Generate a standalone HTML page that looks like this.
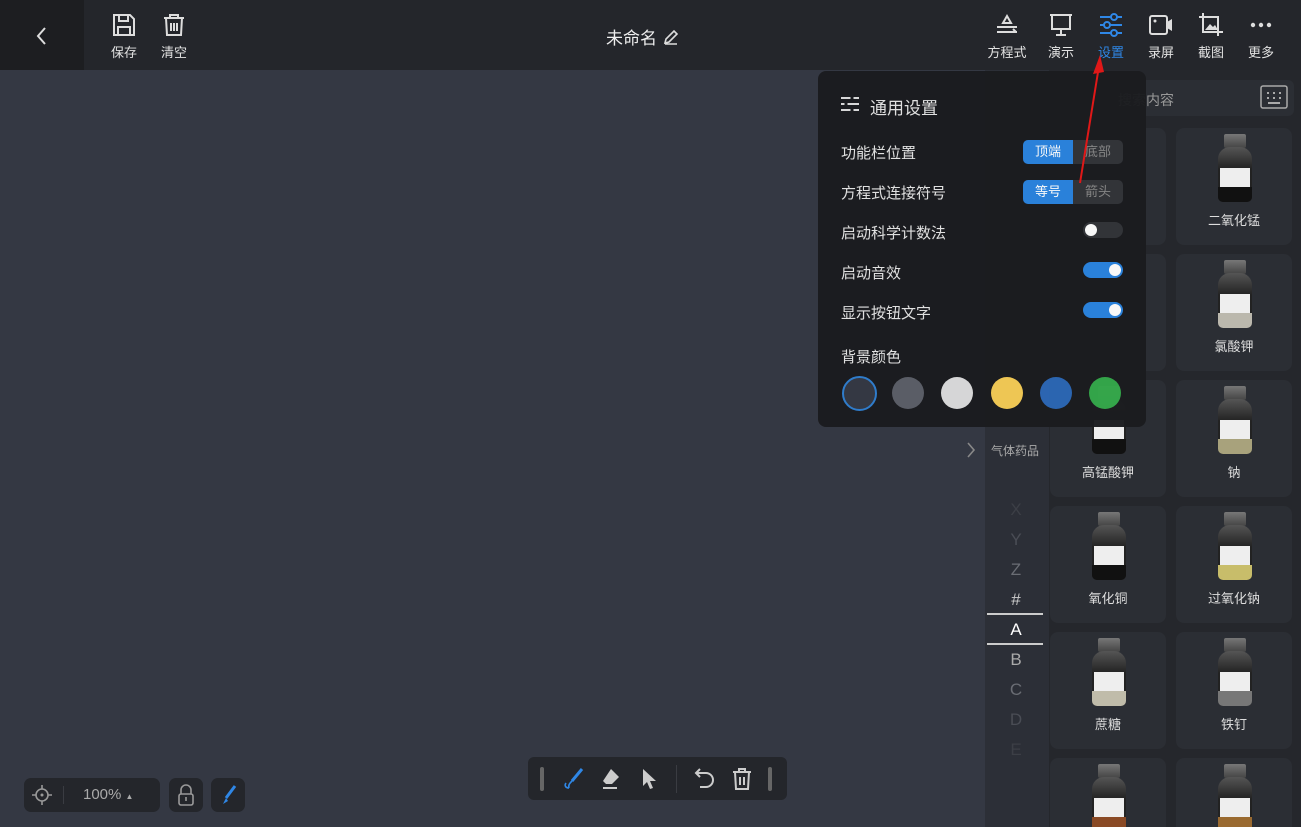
<!DOCTYPE html>
<html><head><meta charset="utf-8"><style>
*{margin:0;padding:0;box-sizing:border-box}
html{width:1301px;height:827px;overflow:hidden}
body{width:1301px;height:827px;overflow:hidden;background:#343843;font-family:"Liberation Sans","Noto Sans CJK SC",sans-serif;position:relative;color:#ddd}
.abs{position:absolute}
.top{left:0;top:0;width:1301px;height:70px;background:#24262b}
.back{left:0;top:0;width:84px;height:70px;background:#1d1e21}
.tb{position:absolute;top:12px;text-align:center;font-size:13px;color:#e2e2e2}
.tb svg{display:block;margin:0 auto 4px}
.side{left:985px;top:70px;width:64px;height:757px;background:#2c2f37}
.panel{left:1049px;top:70px;width:252px;height:757px;background:#25272c}
.clip{left:1049px;top:70px;width:252px;height:757px;overflow:hidden}
.card{position:absolute;width:116px;height:117px;background:#2b2e34;border-radius:8px;text-align:center;font-size:13px;color:#ddd;overflow:hidden}
.bottle{position:absolute;left:42px;top:6px;width:34px;height:68px}
.bottle .cap{position:absolute;left:6px;top:0;width:22px;height:14px;background:linear-gradient(#777,#444);border-radius:2px}
.bottle .body{position:absolute;left:0;top:13px;width:34px;height:55px;background:linear-gradient(#555,#222 40%);border-radius:12px 12px 5px 5px;overflow:hidden}
.bottle .lab{position:absolute;left:2px;top:21px;width:30px;height:19px;background:#eee}
.bottle .fill{position:absolute;left:0;bottom:0;width:34px;height:15px}
.card .nm{position:absolute;left:0;right:0;top:82px}
.letters{left:985px;width:62px;text-align:center;font-size:17px}
.pop{left:818px;top:71px;width:328px;height:356px;background:#1b1c1f;border-radius:8px;opacity:.97}
.row{position:absolute;left:23px;font-size:15px;color:#e6e6e6}
.seg{position:absolute;left:205px;width:100px;height:24px;border-radius:5px;background:#333539;font-size:13px;overflow:hidden}
.seg span{display:inline-block;width:50px;height:24px;line-height:24px;text-align:center;color:#888}
.seg span.on{background:#2a84e0;color:#fff}
.tg{position:absolute;left:265px;width:40px;height:16px;border-radius:8px;background:#333539}
.tg i{position:absolute;top:2px;width:12px;height:12px;border-radius:50%;background:#fff}
.tg.on{background:#2a84e0}
.dot{position:absolute;top:306px;width:32px;height:32px;border-radius:50%}
</style></head><body>
<div class="abs top"></div>
<div class="abs back"><svg class="abs" style="left:35px;top:26px" width="14" height="20"><path d="M10 2 L3 10 L10 18" stroke="#ddd" stroke-width="2" fill="none"/></svg></div>
<div class="tb" style="left:108px;width:32px"><svg width="26" height="26" viewBox="0 0 26 26"><path d="M3 3h16l4 4v16H3z M8 3v6h9V3 M7 23v-8h12v8" stroke="#ddd" stroke-width="2" fill="none"/></svg>保存</div>
<div class="tb" style="left:158px;width:32px"><svg width="26" height="26" viewBox="0 0 26 26"><path d="M3 6h20 M9 6V3h8v3 M5 6l1 17h14l1-17 M10 11v8 M13 11v8 M16 11v8" stroke="#ddd" stroke-width="2" fill="none"/></svg>清空</div>
<div class="abs" style="left:606px;top:24px;font-size:17px;color:#eee">未命名 <svg width="18" height="16" style="vertical-align:-1px"><path d="M3 14l1-4 8-8 3 3-8 8z M3 15h12" stroke="#ddd" stroke-width="1.6" fill="none"/></svg></div>
<div class="tb" style="left:985px;width:44px"><svg width="26" height="26" viewBox="0 0 26 26"><path d="M9 11l4-7 4 7z M3 15h20 M3 20h20 M19 17l3 3" stroke="#ddd" stroke-width="2" fill="none"/></svg>方程式</div>
<div class="tb" style="left:1045px;width:32px"><svg width="26" height="26" viewBox="0 0 26 26"><path d="M2 3h22 M4 3v14h18V3 M13 17v6 M8 23h10" stroke="#ddd" stroke-width="2" fill="none"/></svg>演示</div>
<div class="tb" style="left:1095px;width:32px;color:#2f87e6"><svg width="26" height="26" viewBox="0 0 26 26"><path d="M2 5h22 M2 13h22 M2 21h22" stroke="#2f87e6" stroke-width="2"/><circle cx="16" cy="5" r="3" fill="#24262b" stroke="#2f87e6" stroke-width="2"/><circle cx="9" cy="13" r="3" fill="#24262b" stroke="#2f87e6" stroke-width="2"/><circle cx="16" cy="21" r="3" fill="#24262b" stroke="#2f87e6" stroke-width="2"/></svg>设置</div>
<div class="tb" style="left:1145px;width:32px"><svg width="26" height="26" viewBox="0 0 26 26"><rect x="2" y="4" width="17" height="18" rx="2" stroke="#ddd" stroke-width="2" fill="none"/><path d="M19 10l5-3v12l-5-3z" fill="#ddd"/><circle cx="7" cy="9" r="1.5" fill="#ddd"/></svg>录屏</div>
<div class="tb" style="left:1195px;width:32px"><svg width="26" height="26" viewBox="0 0 26 26"><path d="M5 1v19h20 M1 5h19v19" stroke="#ddd" stroke-width="2" fill="none"/><path d="M7 18l5-6 3 3 2-2 3 5z" fill="#ddd"/></svg>截图</div>
<div class="tb" style="left:1245px;width:32px"><svg width="26" height="26" viewBox="0 0 26 26"><circle cx="5" cy="13" r="2.2" fill="#ddd"/><circle cx="13" cy="13" r="2.2" fill="#ddd"/><circle cx="21" cy="13" r="2.2" fill="#ddd"/></svg>更多</div>

<div class="abs side"></div>
<div class="abs panel"></div>
<div class="abs" style="left:1054px;top:80px;width:240px;height:36px;background:#2b2e34;border-radius:6px;font-size:14px;color:#999;padding:10px 0 0 64px">搜索内容</div>
<svg class="abs" style="left:1260px;top:85px" width="28" height="24"><rect x="1" y="1" width="26" height="22" rx="2" stroke="#aaa" stroke-width="1.5" fill="none"/><path d="M7 8h2M13 8h2M19 8h2M7 13h2M13 13h2M19 13h2M8 18h12" stroke="#aaa" stroke-width="2"/></svg>
<div class="abs" style="left:991px;top:442px;font-size:12px;color:#aaa">气体药品</div>
<svg class="abs" style="left:965px;top:440px" width="12" height="20"><path d="M3 3l6 7-6 7" stroke="#888" stroke-width="1.6" fill="none"/></svg>
<div class="abs letters" style="top:500px;color:#3c3f46">X</div>
<div class="abs letters" style="top:530px;color:#4a4d55">Y</div>
<div class="abs letters" style="top:560px;color:#6a6d74">Z</div>
<div class="abs letters" style="top:590px;color:#ccc">#</div>
<div class="abs" style="left:987px;top:613px;width:56px;height:2px;background:#ccc"></div>
<div class="abs letters" style="top:620px;color:#fff">A</div>
<div class="abs" style="left:987px;top:643px;width:56px;height:2px;background:#ccc"></div>
<div class="abs letters" style="top:650px;color:#aaa">B</div>
<div class="abs letters" style="top:680px;color:#6a6d74">C</div>
<div class="abs letters" style="top:710px;color:#4a4d55">D</div>
<div class="abs letters" style="top:740px;color:#3c3f46">E</div>

<div class="abs clip">
<div class="card" style="left:1px;top:58px"></div>
<div class="card" style="left:127px;top:58px"><div class="bottle"><div class="cap"></div><div class="body"><div class="lab"></div><div class="fill" style="background:#111"></div></div></div><div class="nm">二氧化锰</div></div>
<div class="card" style="left:1px;top:184px"></div>
<div class="card" style="left:127px;top:184px"><div class="bottle"><div class="cap"></div><div class="body"><div class="lab"></div><div class="fill" style="background:#bbb8ad"></div></div></div><div class="nm">氯酸钾</div></div>
<div class="card" style="left:1px;top:310px"><div class="bottle"><div class="cap"></div><div class="body"><div class="lab"></div><div class="fill" style="background:#111"></div></div></div><div class="nm">高锰酸钾</div></div>
<div class="card" style="left:127px;top:310px"><div class="bottle"><div class="cap"></div><div class="body"><div class="lab"></div><div class="fill" style="background:#a8a27c"></div></div></div><div class="nm">钠</div></div>
<div class="card" style="left:1px;top:436px"><div class="bottle"><div class="cap"></div><div class="body"><div class="lab"></div><div class="fill" style="background:#111"></div></div></div><div class="nm">氧化铜</div></div>
<div class="card" style="left:127px;top:436px"><div class="bottle"><div class="cap"></div><div class="body"><div class="lab"></div><div class="fill" style="background:#c8bd6a"></div></div></div><div class="nm">过氧化钠</div></div>
<div class="card" style="left:1px;top:562px"><div class="bottle"><div class="cap"></div><div class="body"><div class="lab"></div><div class="fill" style="background:#c0bcaa"></div></div></div><div class="nm">蔗糖</div></div>
<div class="card" style="left:127px;top:562px"><div class="bottle"><div class="cap"></div><div class="body"><div class="lab"></div><div class="fill" style="background:#777"></div></div></div><div class="nm">铁钉</div></div>
<div class="card" style="left:1px;top:688px;height:69px;border-radius:8px 8px 0 0"><div class="bottle"><div class="cap"></div><div class="body"><div class="lab"></div><div class="fill" style="background:#8a4a25"></div></div></div></div>
<div class="card" style="left:127px;top:688px;height:69px;border-radius:8px 8px 0 0"><div class="bottle"><div class="cap"></div><div class="body"><div class="lab"></div><div class="fill" style="background:#9a6a30"></div></div></div></div>
</div>

<div class="abs pop">
<svg class="abs" style="left:22px;top:24px" width="20" height="18"><path d="M1 3h18M1 9h18M1 15h18" stroke="#ddd" stroke-width="2"/><path d="M12 0v6M6 6v6M12 12v6" stroke="#1b1c1f" stroke-width="3"/></svg>
<div class="row" style="left:52px;top:23px;font-size:17px">通用设置</div>
<div class="row" style="top:71px">功能栏位置</div>
<div class="seg" style="top:69px"><span class="on">顶端</span><span>底部</span></div>
<div class="row" style="top:111px">方程式连接符号</div>
<div class="seg" style="top:109px"><span class="on">等号</span><span>箭头</span></div>
<div class="row" style="top:151px">启动科学计数法</div>
<div class="tg" style="top:151px"><i style="left:2px"></i></div>
<div class="row" style="top:191px">启动音效</div>
<div class="tg on" style="top:191px"><i style="left:26px"></i></div>
<div class="row" style="top:231px">显示按钮文字</div>
<div class="tg on" style="top:231px"><i style="left:26px"></i></div>
<div class="row" style="top:275px">背景颜色</div>
<div class="dot" style="left:24px;background:#343843;border:2px solid #2f7fd0;width:35px;height:35px;top:305px"></div>
<div class="dot" style="left:74px;background:#5c5f68"></div>
<div class="dot" style="left:123px;background:#dcdcdc"></div>
<div class="dot" style="left:173px;background:#f5cb55"></div>
<div class="dot" style="left:222px;background:#2c67b5"></div>
<div class="dot" style="left:271px;background:#34a84a"></div>
</div>
<svg class="abs" style="left:1070px;top:50px" width="40" height="140"><path d="M10 133 L29 16" stroke="#e01818" stroke-width="2"/><path d="M30 5 L23 24 L34 22z" fill="#e01818"/></svg>

<div class="abs" style="left:24px;top:778px;width:136px;height:34px;background:#24262b;border-radius:7px;color:#aaa;font-size:15px">
<svg class="abs" style="left:8px;top:7px" width="20" height="20"><circle cx="10" cy="10" r="6" stroke="#999" stroke-width="1.6" fill="none"/><circle cx="10" cy="10" r="1.5" fill="#999"/><path d="M10 0v4M10 16v4M0 10h4M16 10h4" stroke="#999" stroke-width="1.6"/></svg>
<div class="abs" style="left:39px;top:8px;width:1px;height:18px;background:#3a3c42"></div>
<div class="abs" style="left:59px;top:8px">100% <span style="font-size:8px">▲</span></div></div>
<div class="abs" style="left:169px;top:778px;width:34px;height:34px;background:#24262b;border-radius:7px"><svg class="abs" style="left:8px;top:6px" width="18" height="22"><path d="M4 10V6a5 5 0 0 1 10 0v4" stroke="#999" stroke-width="1.6" fill="none"/><rect x="2" y="10" width="14" height="11" rx="2" stroke="#999" stroke-width="1.6" fill="none"/><path d="M9 13v4" stroke="#999" stroke-width="1.6"/></svg></div>
<div class="abs" style="left:211px;top:778px;width:34px;height:34px;background:#24262b;border-radius:7px"><svg class="abs" style="left:8px;top:6px" width="20" height="22"><path d="M16 2L7 14" stroke="#2f87e6" stroke-width="3"/><path d="M7 14l-3 6 5-3z" fill="#2f87e6"/></svg></div>
<div class="abs" style="left:528px;top:757px;width:259px;height:43px;background:#24262b;border-radius:6px">
<div class="abs" style="left:12px;top:10px;width:4px;height:24px;background:#666;border-radius:2px"></div>
<div class="abs" style="left:240px;top:10px;width:4px;height:24px;background:#666;border-radius:2px"></div>
<div class="abs" style="left:148px;top:8px;width:1px;height:28px;background:#3a3c42"></div>
<svg class="abs" style="left:32px;top:10px" width="26" height="26"><path d="M22 2L12 14" stroke="#2f87e6" stroke-width="3"/><path d="M12 14c-2 2-4 4-3 7 M9 21c-3 0-5-2-3-5" stroke="#2f87e6" stroke-width="1.6" fill="none"/></svg>
<svg class="abs" style="left:72px;top:10px" width="22" height="24"><path d="M11 2l8 8-7 7H6l-3-3z" fill="#ccc"/><path d="M3 21h14" stroke="#ccc" stroke-width="2"/></svg>
<svg class="abs" style="left:112px;top:10px" width="18" height="24"><path d="M3 2v17l4-4 3 7 3-1-3-7h6z" fill="#ccc"/></svg>
<svg class="abs" style="left:166px;top:10px" width="22" height="24"><path d="M6 2L2 6l4 4 M2 6h10a7 7 0 0 1 0 14H6" stroke="#ccc" stroke-width="2" fill="none"/></svg>
<svg class="abs" style="left:203px;top:10px" width="22" height="24"><path d="M2 5h18 M8 5V2h6v3 M4 5l1 17h12l1-17 M9 10v8 M13 10v8" stroke="#ccc" stroke-width="2" fill="none"/></svg>
</div>
</body></html>
